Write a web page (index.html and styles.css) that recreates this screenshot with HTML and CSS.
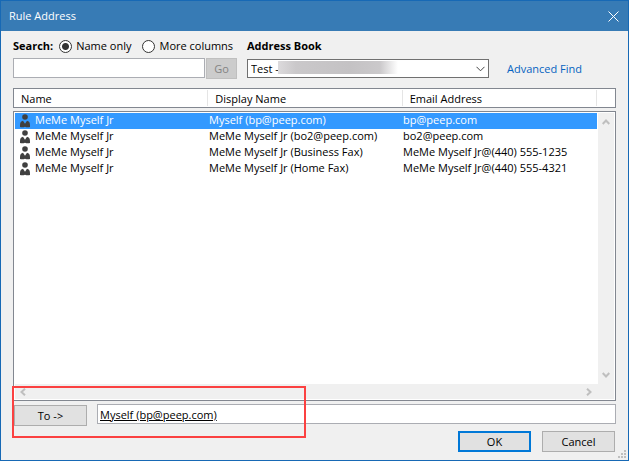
FILE: index.html
```html
<!DOCTYPE html>
<html lang="en">
<head>
<meta charset="UTF-8">
<meta name="viewport" content="width=device-width, initial-scale=1.0">
<title>Rule Address</title>
<link rel="stylesheet" href="styles.css">
</head>
<body>
<!-- Person icon shared by the list rows -->
<svg class="symbols" aria-hidden="true">
    <symbol id="person" viewBox="0 0 12 14">
        <circle cx="6" cy="3" r="2.8"/>
        <path d="M1 13Q.8 8.2 2.3 7.4L4 6.8 6 9.8 8 6.8 9.7 7.4Q11.2 8.2 11 13 8.5 13.8 6 12.8 3.5 13.8 1 13Z"/>
    </symbol>
</svg>
<form class="dialog">
    <header class="title-bar">
        <h1>Rule Address</h1>
        <button type="button" class="close-button" aria-label="Close">
            <svg width="11" height="11" viewBox="0 0 11 11"><path d="M.5 .5l10 10M10.5 .5l-10 10"/></svg>
        </button>
    </header>
    <main class="content">
        <div class="search-bar">
            <div class="search-group">
                <div class="options">
                    <label class="caption" for="searchText">Search:</label>
                    <div class="radios">
                        <label class="option"><input type="radio" name="scope" checked>Name only</label>
                        <label class="option"><input type="radio" name="scope">More columns</label>
                    </div>
                </div>
                <div class="fields">
                    <input type="text" class="search-input" id="searchText">
                    <button type="button" class="go-button" disabled>Go</button>
                </div>
            </div>
            <div class="book-group">
                <label class="caption" for="book">Address Book</label>
                <div class="book-field">
                    <select id="book"><option>Test -</option></select>
                    <span class="smudge"></span>
                    <svg class="arrow" width="9" height="6" viewBox="0 0 9 6"><path d="M.5 .8l4 4 4-4"/></svg>
                </div>
            </div>
            <a class="advanced" href="#">Advanced Find</a>
        </div>

        <div class="results">
            <table>
                <thead>
                    <tr><th>Name</th><th>Display Name</th><th>Email Address</th></tr>
                </thead>
                <tbody>
                    <tr class="selected">
                        <td><svg class="person"><use href="#person"/></svg>MeMe Myself Jr</td>
                        <td>Myself (bp@peep.com)</td>
                        <td>bp@peep.com</td>
                    </tr>
                    <tr>
                        <td><svg class="person"><use href="#person"/></svg>MeMe Myself Jr</td>
                        <td>MeMe Myself Jr (bo2@peep.com)</td>
                        <td>bo2@peep.com</td>
                    </tr>
                    <tr>
                        <td><svg class="person"><use href="#person"/></svg>MeMe Myself Jr</td>
                        <td>MeMe Myself Jr (Business Fax)</td>
                        <td>MeMe Myself Jr@(440) 555-1235</td>
                    </tr>
                    <tr>
                        <td><svg class="person"><use href="#person"/></svg>MeMe Myself Jr</td>
                        <td>MeMe Myself Jr (Home Fax)</td>
                        <td>MeMe Myself Jr@(440) 555-4321</td>
                    </tr>
                </tbody>
            </table>
            <div class="scroll-v">
                <svg width="8" height="6" viewBox="0 0 8 6"><path d="M.7 5l3.3-3.5L7.3 5"/></svg>
                <svg width="8" height="6" viewBox="0 0 8 6"><path d="M.7 1l3.3 3.5L7.3 1"/></svg>
            </div>
            <div class="scroll-h">
                <svg width="6" height="8" viewBox="0 0 6 8"><path d="M5 .7L1.5 4 5 7.3"/></svg>
                <svg width="6" height="8" viewBox="0 0 6 8"><path d="M1 .7L4.5 4 1 7.3"/></svg>
            </div>
        </div>

        <div class="recipient">
            <button type="button" class="button" id="toButton">To -&gt;</button>
            <input type="text" class="to-input" aria-labelledby="toButton" value="Myself (bp@peep.com)">
            <span class="highlight"></span>
        </div>

        <footer class="actions">
            <button type="button" class="button default">OK</button>
            <button type="button" class="button">Cancel</button>
            <svg class="grip" width="8" height="8" viewBox="0 0 8 8">
                <path d="M6 0h2v2H6zM3 3h2v2H3zM6 3h2v2H6zM0 6h2v2H0zM3 6h2v2H3zM6 6h2v2H6z"/>
            </svg>
        </footer>
    </main>
</form>
</body>
</html>
```

FILE: styles.css
```css
* {
    box-sizing: border-box;
}
body {
    margin: 0;
    font-family: "Open Sans", "Noto Sans", sans-serif;
    font-size: 11px;
    line-height: 16px;
    color: #000;
}
button, input, select {
    font: inherit;
    color: inherit;
    margin: 0;
}
svg {
    fill: none;
    stroke: #bfbfbf;
    stroke-width: 2;
}
.symbols {
    display: none;
}
.dialog {
    display: flex;
    flex-direction: column;
    min-height: 100vh;
    border: 1px solid #1769b5;
    background-color: #f0f0f0;
}
.title-bar {
    display: flex;
    align-items: center;
    justify-content: space-between;
    height: 30px;
    padding: 0 9px 0 8px;
    background-color: #377bb5;
    color: #fff;
}
.title-bar h1 {
    margin: 0;
    font-size: 11px;
    font-weight: normal;
}
.close-button {
    display: flex;
    padding: 0;
    border: none;
    background: none;
}
.close-button svg {
    stroke: #fff;
    stroke-width: 1;
}
.content {
    flex: 1;
    display: flex;
    flex-direction: column;
    padding: 7px 12px 8px;
}
.search-bar {
    display: flex;
    align-items: flex-end;
}
.search-group {
    width: 234px;
}
.options {
    display: flex;
    gap: 6px;
    white-space: nowrap;
}
.radios {
    display: flex;
    gap: 11px;
}
.caption {
    font-weight: bold;
}
.option {
    display: flex;
    align-items: center;
    gap: 4px;
}
.option input {
    appearance: none;
    width: 13px;
    height: 13px;
    border: 1px solid #333;
    border-radius: 50%;
    background-color: #fff;
}
.option input:checked {
    background-image: radial-gradient(circle, #333 3px, transparent 4px);
}
.fields {
    display: flex;
    gap: 1px;
    margin-top: 4px;
}
.search-input {
    width: 192px;
    height: 20px;
    border: 1px solid #abadb3;
    background-color: #fff;
}
.go-button {
    width: 31px;
    height: 21px;
    padding: 0;
    border: 1px solid #bfbfbf;
    background-color: #ccc;
    color: #838383;
}
.book-group {
    width: 242px;
}
.book-field {
    position: relative;
    margin: 5px 0 1px;
}
.book-field select {
    display: block;
    appearance: none;
    width: 100%;
    height: 19px;
    padding: 0 3px;
    border: 1px solid #707070;
    border-radius: 0;
    background-color: #fff;
}
.smudge {
    position: absolute;
    top: 2px;
    left: 31px;
    width: 120px;
    height: 13px;
    background: linear-gradient(90deg, #dcdadc, #cac8ca 15%, #c4c2c4 60%, #cbc9cb 85%, #fff);
}
.arrow {
    position: absolute;
    top: 7px;
    right: 4px;
    stroke: #444;
    stroke-width: 1;
}
.advanced {
    margin-left: 18px;
    padding-bottom: 2px;
    color: #0563c1;
    text-decoration: none;
}
.results {
    flex: 1;
    display: grid;
    grid-template-columns: 1fr 18px;
    grid-template-rows: 1fr 17px;
    margin-top: 9px;
}
.results table {
    grid-area: 1 / 1 / 3 / 3;
    display: flex;
    flex-direction: column;
    gap: 3px;
}
.results thead, .results tbody {
    display: block;
    border: 1px solid #828790;
    background-color: #fff;
}
.results thead {
    padding-right: 18px;
}
.results tbody {
    flex: 1;
    padding: 1px 18px 0 1px;
}
.results tr {
    display: grid;
    grid-template-columns: 1fr 1fr 1fr;
    white-space: nowrap;
}
.results th {
    margin: 1px 0;
    padding: 2px 0 0 7px;
    border-right: 1px solid #e5e5e5;
    font-weight: normal;
    line-height: 14px;
    text-align: left;
}
.results td {
    display: flex;
    align-items: flex-start;
    height: 16px;
    padding: 0;
    line-height: 14px;
}
.results td:first-child {
    gap: 4px;
    padding-left: 4px;
}
.selected {
    background-color: #3399ff;
    color: #fff;
}
.person {
    width: 12px;
    height: 14px;
    margin-top: 1px;
    fill: #404040;
    stroke: none;
}
.scroll-v, .scroll-h {
    display: flex;
    align-items: center;
    justify-content: space-between;
    background-color: #f0f0f0;
}
.scroll-v {
    grid-area: 1 / 2;
    flex-direction: column;
    margin: 25px 2px 0 0;
    padding: 6px 0;
}
.scroll-h {
    grid-area: 2 / 1 / 3 / 3;
    margin: 0 2px 2px;
    padding: 0 22px 0 5px;
}
.recipient {
    position: relative;
    display: flex;
    gap: 10px;
    margin-top: 3px;
    padding-left: 1px;
}
.button {
    width: 73px;
    height: 21px;
    padding: 0;
    border: 1px solid #adadad;
    background-color: #e1e1e1;
}
.recipient .button {
    margin-top: 1px;
}
.to-input {
    flex: 1;
    height: 20px;
    padding: 0 2px;
    border: 1px solid #abadb3;
    background-color: #fff;
    text-decoration: underline;
}
.highlight {
    position: absolute;
    top: -18px;
    bottom: -12px;
    left: -1px;
    width: 294px;
    border: 2px solid #fb4141;
    pointer-events: none;
}
.actions {
    position: relative;
    display: flex;
    justify-content: flex-end;
    gap: 11px;
    margin-top: 5px;
    padding-right: 1px;
}
.default {
    border: 2px solid #0078d7;
}
.grip {
    position: absolute;
    right: -10px;
    bottom: -6px;
    fill: #bfbfbf;
    stroke: none;
}
```
